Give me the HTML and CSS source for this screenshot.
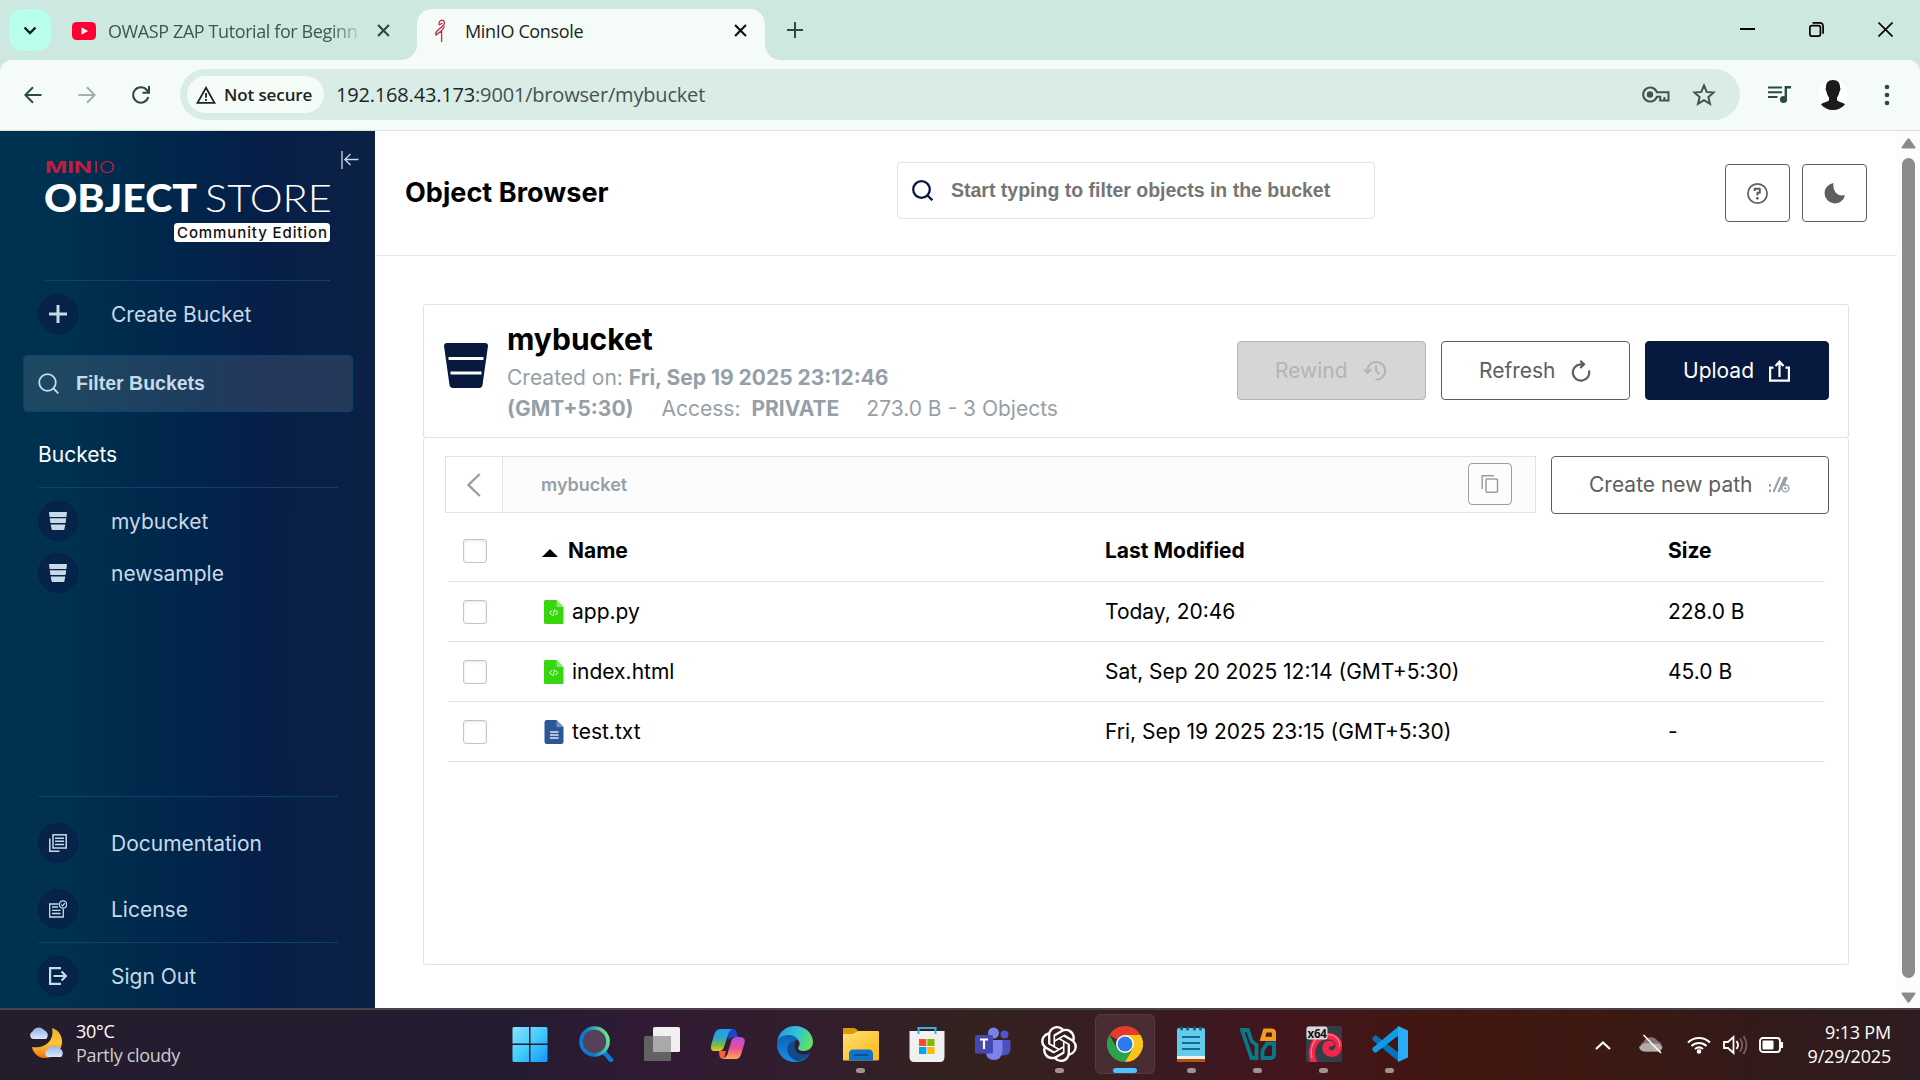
FILE: index.html
```html
<!DOCTYPE html>
<html lang="en">
<head>
<meta charset="utf-8">
<title>MinIO Console</title>
<link rel="stylesheet" href="styles.css">
</head>
<body>
<svg class="defs" width="0" height="0" aria-hidden="true">
  <symbol id="bucket" viewBox="0 0 18 18"><path fill="currentColor" d="M0 .8Q0 0 .8 0H17.2Q18 0 18 .8L17.4 5H.6ZM.8 6.3H17.2L16.6 11H1.4ZM1.7 12.5H16.3L15.4 17.2Q15.2 18 14.5 18H3.5Q2.8 18 2.6 17.2Z"/></symbol>
  <symbol id="close" viewBox="0 0 12 12"><path d="M1 1 11 11M11 1 1 11" fill="none" stroke="currentColor" stroke-width="2"/></symbol>
  <symbol id="search" viewBox="0 0 21 21"><circle cx="9.5" cy="9.5" r="8.3"/><path d="M15.5 15.5 20.3 20.3"/></symbol>
  <symbol id="codefile" viewBox="0 0 20 24"><path fill="#37d60f" d="M1.5 0H12.5L19.5 7V22.5Q19.5 24 18 24H1.5Q0 24 0 22.5V1.5Q0 0 1.5 0Z"/><path fill="#86ea6d" d="M12.5 0 19.5 7H12.5Z"/><path fill="none" stroke="#fff" stroke-width="1" d="M8 10.2 5.8 12.7 8 15.2M11.5 10.2 13.7 12.7 11.5 15.2M10.5 9.7 9 16"/></symbol>
</svg>

<header class="tabstrip">
  <div class="tabsearch"><svg width="14" height="9" viewBox="0 0 14 9"><path d="M1.5 1.5 7 7 12.5 1.5" fill="none" stroke="#0e1f1a" stroke-width="2.4"/></svg></div>
  <div class="tab idle">
    <svg width="24" height="18" viewBox="0 0 24 18"><rect width="24" height="18" rx="4.5" fill="#ff0033"/><path d="M9.5 5.2 16 9 9.5 12.8Z" fill="#fff"/></svg>
    <span class="tabtitle fade">OWASP ZAP Tutorial for Beginn</span>
    <svg class="x" width="13" height="13"><use href="#close"/></svg>
  </div>
  <div class="tab active">
    <svg class="bird" width="14" height="24" viewBox="0 0 14 24"><path d="M5 6Q5 1.2 8 1.2 11.7 2 9.8 6L3.2 11.7Q1 14.5 2 16L7.8 11.5 10.5 7.5M2.5 15.7 1.5 16.5M7.6 11.5V23M5 6 8.5 4.2" fill="none" stroke="#c72c48" stroke-width="1.3"/></svg>
    <span class="tabtitle">MinIO Console</span>
    <svg class="x" width="13" height="13"><use href="#close"/></svg>
  </div>
  <svg class="plus" width="16" height="16" viewBox="0 0 16 16"><path d="M8 0V16M0 8H16" stroke="#2b4a40" stroke-width="2"/></svg>
  <div class="winctl">
    <svg width="15" height="15" viewBox="0 0 15 15"><path d="M0 7H15" stroke="#000" stroke-width="2"/></svg>
    <svg width="15" height="15" viewBox="0 0 15 15" fill="none" stroke="#000" stroke-width="1.7"><rect x=".9" y="3.6" width="10.5" height="10.5" rx="2"/><path d="M3.6 1.2Q4 .9 5 .9H10.5Q14.1 .9 14.1 4.5V10Q14.1 11 13.6 11.6"/></svg>
    <svg width="15" height="15" viewBox="0 0 15 15"><path d="M.5 .5 14.5 14.5M14.5 .5 .5 14.5" stroke="#000" stroke-width="1.6"/></svg>
  </div>
</header>

<div class="toolwrap"><nav class="toolbar">
  <svg class="nav" width="18" height="18" viewBox="0 0 18 18"><path d="M17.5 9H1.5M9 1.2 1.3 9 9 16.8" fill="none" stroke="#2b4a40" stroke-width="2"/></svg>
  <svg class="nav" width="18" height="18" viewBox="0 0 18 18"><path d="M.5 9H16.5M9 1.2 16.7 9 9 16.8" fill="none" stroke="#a0b0aa" stroke-width="2"/></svg>
  <svg class="nav" width="18" height="18" viewBox="0 0 18 18"><path d="M16.3 11A7.7 7.7 0 1 1 14.8 4L17 6.5M17 0V6.8H10.5" fill="none" stroke="#2b4a40" stroke-width="2"/></svg>
  <div class="omnibox">
    <div class="chip"><svg width="20" height="18" viewBox="0 0 20 18"><path d="M10 1.8 18.5 16.9H1.5Z" fill="none" stroke="#1d2623" stroke-width="1.8"/><path d="M10 7V11.7M10 13V15" stroke="#1d2623" stroke-width="1.8"/></svg><span>Not secure</span></div>
    <div class="url"><b>192.168.43.173</b>:9001/browser/mybucket</div>
    <svg class="key" width="28" height="17" viewBox="0 0 28 17" fill="none" stroke="#44524d" stroke-width="2"><path d="M14.8 6.2A7 7 0 1 0 14.8 10.8H18.2V14.5H26.5V6.2Z"/><circle cx="8" cy="8.5" r="2.2" fill="#44524d"/><path d="M22.4 14V11"/></svg>
    <svg width="24" height="23" viewBox="0 0 24 23"><path d="M12 2.5 14.7 8.9 21.6 9.5 16.4 14 18 20.8 12 17.2 6 20.8 7.6 14 2.4 9.5 9.3 8.9Z" fill="none" stroke="#44524d" stroke-width="2"/></svg>
  </div>
  <svg class="queue" width="24" height="18" viewBox="0 0 24 18"><path d="M0 1.5H14M0 6.3H14M0 11H9.5" stroke="#2b4a40" stroke-width="2"/><path d="M17.8 13V1.2H23" fill="none" stroke="#2b4a40" stroke-width="2.4"/><circle cx="15.5" cy="13.5" r="3.6" fill="#2b4a40"/></svg>
  <svg class="avatar" width="30" height="30" viewBox="0 0 30 30"><circle cx="15" cy="15" r="15" fill="#fff"/><path d="M15 0C10 0 7.8 3 8 7.5 7.2 8 7.5 10.5 8.5 11.5 9 15 10.5 16.5 11 17.5V20.5C8 22.5 4.5 22.5 3 24.5 6 28 10 30 15 30S24 28 27 24.500C25.500 22.500 22 22.500 19 20.500V17.500C19.500 16.500 21 15 21.500 11.500 22.500 10.500 22.800 8 22 7.500 22.200 3 20 0 15 0Z" fill="#1c1b1a"/></svg>
  <svg class="dots" width="6" height="22" viewBox="0 0 6 22"><g fill="#2b4a40"><circle cx="3" cy="3" r="2.3"/><circle cx="3" cy="11" r="2.3"/><circle cx="3" cy="19" r="2.3"/></g></svg>
</nav></div>

<div class="page">
  <aside class="sidebar">
    <div class="brand">
      <svg class="logo" width="285" height="82" viewBox="0 0 285 82">
        <text class="lg-min" x="0" y="12" textLength="47" lengthAdjust="spacingAndGlyphs">MIN</text>
        <text class="lg-io" x="48" y="12" textLength="22" lengthAdjust="spacingAndGlyphs">IO</text>
        <text class="lg-object" x="-1" y="51" textLength="153" lengthAdjust="spacingAndGlyphs">OBJECT</text>
        <text class="lg-store" x="160" y="51" textLength="127" lengthAdjust="spacingAndGlyphs">STORE</text>
        <rect x="129" y="62" width="156" height="19" rx="3.500" fill="#fff"/>
        <text class="lg-ed" x="132" y="76.500" textLength="150" lengthAdjust="spacing">Community Edition</text>
      </svg>
      <svg class="collapse" width="18" height="18" viewBox="0 0 18 18"><path d="M1 0V18M17.500 8.500H4M9.500 3 3.800 8.500 9.500 14" fill="none" stroke="#c8d9e9" stroke-width="1.300"/></svg>
    </div>
    <div class="item create"><i class="disc"><svg width="18" height="18" viewBox="0 0 18 18"><path d="M9 0V18M0 9H18" stroke="#c8d9e9" stroke-width="3"/></svg></i>Create Bucket</div>
    <div class="filter"><svg width="21" height="21" class="s-light"><use href="#search"/></svg>Filter Buckets</div>
    <div class="heading">Buckets</div>
    <div class="item bk"><i class="disc"><svg width="18" height="18"><use href="#bucket"/></svg></i>mybucket</div>
    <div class="item bk"><i class="disc"><svg width="18" height="18"><use href="#bucket"/></svg></i>newsample</div>
    <div class="bottom">
      <div class="item low"><i class="disc"><svg width="18" height="18" viewBox="0 0 18 18" fill="none" stroke="#c8d9e9" stroke-width="1.500"><rect x="4" y=".8" width="13.200" height="13.200"/><path d="M.8 4.500V17.200H10.500M6 4.200H15M6 7.300H15M6 10.500H15"/></svg></i>Documentation</div>
      <div class="item low"><i class="disc"><svg width="18" height="18" viewBox="0 0 18 18" fill="none" stroke="#c8d9e9" stroke-width="1.300"><path d="M9.500 4H.7V17H14.300V9M3 7H9M3 10.300H11.500M3 13.500H11.500"/><circle cx="14" cy="4.500" r="3.700"/><path d="M12.300 4.600 13.600 5.900 15.800 3.200"/></svg></i>License</div>
      <div class="item low out"><i class="disc"><svg width="18" height="18" viewBox="0 0 18 18" fill="none" stroke="#c8d9e9" stroke-width="2.200"><path d="M12 1.100H1.100V16.900H12M4.500 9H16.500M12.500 4.500 17 9 12.500 13.500"/></svg></i>Sign Out</div>
    </div>
  </aside>

  <main class="main">
    <div class="pagehead">
      <h1>Object Browser</h1>
      <div class="searchbox"><svg width="21" height="21" class="s-dark"><use href="#search"/></svg>Start typing to filter objects in the bucket</div>
      <div class="headbtns">
        <div class="sq"><svg width="21" height="21" viewBox="0 0 21 21"><circle cx="10.500" cy="10.500" r="9.600" fill="none" stroke="#5e5e5e" stroke-width="1.700"/><path d="M7.700 8V5.800H12.800V9.800H10.400V12.500" fill="none" stroke="#5e5e5e" stroke-width="2" stroke-linejoin="round"/><circle cx="10.400" cy="15.300" r="1.400" fill="#5e5e5e"/></svg></div>
        <div class="sq"><svg width="21" height="21" viewBox="0 0 21 21"><path d="M9.500 0A10.300 10.300 0 1 0 21 12Q15 13.500 11.500 9.500 8.700 6 9.500 0Z" fill="#5e5e5e"/></svg></div>
      </div>
    </div>

    <div class="card">
      <section class="cardhead">
        <svg class="bigbucket" width="44" height="45" viewBox="0 0 44 45"><path fill="#07193e" d="M0 3Q0 0 3 0H41Q44 0 44 3L38.500 42Q38 45 35 45H9Q6 45 5.500 42Z"/><path d="M4.500 15.500H39.500M6.500 30H37.500" stroke="#fff" stroke-width="3"/></svg>
        <div class="info">
          <h2>mybucket</h2>
          <p>Created on: <b>Fri, Sep 19 2025 23:12:46</b></p>
          <p class="l2"><b>(GMT+5:30)</b><span class="acc">Access:</span><b class="priv">PRIVATE</b><span>273.0 B - 3 Objects</span></p>
        </div>
        <div class="btn off rw">Rewind<svg width="24" height="21" viewBox="0 0 24 21" fill="none" stroke="#b4b4b4" stroke-width="2"><path d="M4.300 12V10A9 8.800 0 1 1 12.500 19.500M.8 9.200 4.300 12.800 8 9.200M13 5.500V10.500L16 14"/></svg></div>
        <div class="btn rf">Refresh<svg width="20" height="22" viewBox="0 0 20 22" fill="none" stroke="#5e5e5e" stroke-width="2.200"><path d="M18 10.500A8.200 8.200 0 1 1 9.500 4.300H13M9.300 .8 13 4.300 9.300 8"/></svg></div>
        <div class="btn prim">Upload<svg width="21" height="22" viewBox="0 0 21 22" fill="none" stroke="#fff" stroke-width="2.200"><path d="M4.500 7.600H1.100V20.600H19.900V7.600H16.500M10.500 17V2.500M6.500 6 10.500 1.700 14.500 6"/></svg></div>
      </section>

      <section class="cardbody">
        <div class="pathrow">
          <div class="crumb">
            <div class="back"><svg width="14" height="24" viewBox="0 0 14 24"><path d="M12.800 1 1.500 12 12.800 23" fill="none" stroke="#969fa8" stroke-width="2.400"/></svg></div>
            <div class="where">mybucket</div>
            <div class="copy"><svg width="18" height="18" viewBox="0 0 18 18" fill="none" stroke="#969fa8" stroke-width="1.500"><path d="M1.200 14V.8H13"/><rect x="5" y="4" width="11.500" height="13.200" rx="1"/></svg></div>
          </div>
          <div class="btn newpath">Create new path<svg width="22" height="17" viewBox="0 0 22 17" fill="none" stroke="#969fa8" stroke-width="2"><path d="M2 8V10.500M2 13.500V16M5.500 16 12 1M10.500 16 17 1M19 1 15.500 9"/><circle cx="17.300" cy="12.300" r="3.600" stroke-width="1.400"/><path d="M15.700 12.300H19M17.300 10.700V14" stroke-width="1"/></svg></div>
        </div>
        <div class="table">
          <div class="tr th"><span class="cb"></span><div class="name"><svg class="sort" width="16" height="8" viewBox="0 0 16 8"><path d="M8 0 16 8H0Z"/></svg>Name</div><div>Last Modified</div><div>Size</div></div>
          <div class="tr"><span class="cb"></span><div class="name"><svg width="20" height="24"><use href="#codefile"/></svg>app.py</div><div>Today, 20:46</div><div>228.0 B</div></div>
          <div class="tr"><span class="cb"></span><div class="name"><svg width="20" height="24"><use href="#codefile"/></svg>index.html</div><div>Sat, Sep 20 2025 12:14 (GMT+5:30)</div><div>45.0 B</div></div>
          <div class="tr"><span class="cb"></span><div class="name"><svg width="20" height="24" viewBox="0 0 20 24"><path fill="#2b5797" d="M2.500 0H12.500L19.500 7V21.500Q19.500 24 17 24H3Q.5 24 .5 21.500V2.500Q.5 0 2.500 0Z"/><path fill="#6f93c8" d="M12.500 0 19.500 7H12.500Z"/><path stroke="#dce6f5" stroke-width="1.600" d="M6 12H14.500M6 15H14.500M6 18H14.500"/></svg>test.txt</div><div>Fri, Sep 19 2025 23:15 (GMT+5:30)</div><div>-</div></div>
        </div>
      </section>
    </div>
  </main>

  <div class="scroll">
    <svg width="15" height="11" viewBox="0 0 15 11"><path d="M7.500 1.200 13.500 9.500H1.500Z" fill="#8b8b8b" stroke="#8b8b8b" stroke-width="2" stroke-linejoin="round"/></svg>
    <div class="thumb"></div>
    <svg width="15" height="11" viewBox="0 0 15 11"><path d="M7.500 9.800 13.500 1.500H1.500Z" fill="#8b8b8b" stroke="#8b8b8b" stroke-width="2" stroke-linejoin="round"/></svg>
  </div>
</div>

<footer class="taskbar">
  <div class="weather">
    <svg width="37" height="34" viewBox="0 0 37 34">
      <defs><linearGradient id="mn" x1="0" y1="0" x2="0" y2="1"><stop offset="0" stop-color="#e9ae3b"/><stop offset=".5" stop-color="#ffc730"/><stop offset="1" stop-color="#f0750f"/></linearGradient><linearGradient id="cl" x1="0" y1="0" x2="0" y2="1"><stop offset="0" stop-color="#8fb3ea"/><stop offset="1" stop-color="#dbe7fa"/></linearGradient></defs>
      <path d="M23 3C30 5 33.500 11 33 18 32 28 24 33 16 33 9 33 4 28 3 22 13 24 26 18 23 3Z" fill="url(#mn)"/>
      <path d="M4 14A4 4 0 0 1 3.500 6.500 7 7 0 0 1 15.500 5.500 5 5 0 0 1 17 14Z" fill="url(#cl)"/>
      <path d="M19 32A4 4 0 0 1 18.500 24.500 7 7 0 0 1 30.500 23.500 5 5 0 0 1 32 32Z" fill="url(#cl)"/>
    </svg>
    <div><div>30°C</div><div class="dim">Partly cloudy</div></div>
  </div>
  <div class="apps">
    <div class="app"><svg width="36" height="36" viewBox="0 0 36 36"><defs><linearGradient id="win" gradientUnits="userSpaceOnUse" x1="0" y1="0" x2="36" y2="36"><stop offset="0" stop-color="#8fe3ff"/><stop offset=".5" stop-color="#43ccfc"/><stop offset="1" stop-color="#0f97fa"/></linearGradient></defs><path fill="url(#win)" d="M1.500 1H17V17.500H.5V2ZM18.500 1H34.500L35.500 2V17.500H18.500ZM.5 19H17V36H1.500L.5 35ZM18.500 19H35.500V35L34.500 36H18.500Z"/></svg></div>
    <div class="app"><svg width="36" height="36" viewBox="0 0 36 36"><defs><linearGradient id="sr" x1="0" y1="0.500" x2="1" y2=".2"><stop offset=".3" stop-color="#0f7ad4"/><stop offset="1" stop-color="#6af088"/></linearGradient></defs><path d="M26 26 33 34" stroke="#0a7cdd" stroke-width="4.500" stroke-linecap="round"/><circle cx="16.500" cy="15.500" r="13.500" fill="#55425a" stroke="url(#sr)" stroke-width="3.600"/></svg></div>
    <div class="app"><svg width="36" height="36" viewBox="0 0 36 36"><rect x="0" y="10" width="27" height="25" rx="1.500" fill="#646163"/><rect x="9" y="1" width="27" height="25" rx="1.500" fill="#f1f0f1"/><rect x="9" y="10" width="18" height="16" fill="#aaa9aa"/></svg></div>
    <div class="app"><svg width="36" height="36" viewBox="0 0 36 36"><defs><linearGradient id="ca" x1="0" y1="0" x2="0" y2="1"><stop offset="0" stop-color="#1a9cf0"/><stop offset=".45" stop-color="#37a7c0"/><stop offset=".75" stop-color="#7bbd3d"/><stop offset="1" stop-color="#f7c32a"/></linearGradient><linearGradient id="cb" x1="0" y1="0" x2="0" y2="1"><stop offset="0" stop-color="#b04fe8"/><stop offset=".5" stop-color="#ec4f93"/><stop offset="1" stop-color="#ffa552"/></linearGradient></defs><path d="M17 3H23Q26 3 26.500 6L28 11H24Q20 11 19 15Z" fill="#1b47c9"/><path d="M9 25H16L14 33Q10 33 9.500 30Z" fill="#f0643a"/><path d="M10 3H22Q19 5 18 9L14 21Q13 25 9 25H4Q0 25 1.200 19L4 9Q6 3 10 3Z" fill="url(#ca)"/><path d="M27 11H30Q36 11 34.500 17L31.500 27Q30 33 26 33H12Q16 32 17.500 28L21 16Q22 11 27 11Z" fill="url(#cb)"/></svg></div>
    <div class="app"><svg width="36" height="36" viewBox="0 0 36 36"><defs><linearGradient id="eg" x1="0" y1=".3" x2="1" y2=".6"><stop offset="0" stop-color="#1d9be2"/><stop offset=".5" stop-color="#34c2d8"/><stop offset="1" stop-color="#64e45a"/></linearGradient><linearGradient id="eb" x1="0" y1="0" x2="0" y2="1"><stop offset="0" stop-color="#0a62b4"/><stop offset="1" stop-color="#188fe5"/></linearGradient></defs><path d="M0 17C1 6 9 0 18 0 29 0 36 8 36 16 36 22 31 25 27 25 22 25 20.500 23 21.500 21 25 16 20 11 14 11 7 9 1 12 0 17Z" fill="url(#eg)"/><path d="M0 18C1 11 7 8.500 13 9 18 9.500 21 13 21 14 17 14 14 17 14 21 15 29 24 33 33 27 30 33 25 36 18 36 8 36 0 29 0 18Z" fill="url(#eb)"/><path d="M18 14.500C12 16 9.500 20 10.500 25 12 32 18 35.500 23 35 28 33 32 30 33.300 27.300 25 31 15 27 18 14.500Z" fill="#114a91"/></svg></div>
    <div class="app run"><svg width="36" height="36" viewBox="0 0 36 36"><defs><linearGradient id="fo" x1="0" y1="0" x2="1" y2="1"><stop offset="0" stop-color="#ffdf77"/><stop offset="1" stop-color="#fbb911"/></linearGradient></defs><path d="M0 3Q0 2 1 2H11Q13 2 15 5L12 9H0Z" fill="#dd9b06"/><path d="M0 8H10L15 5H35Q36 5 36 6V33.500Q36 34.500 35 34.500H1Q0 34.500 0 33.500Z" fill="url(#fo)"/><path d="M6 34.500V28Q6 23.500 10 23.500H26Q30 23.500 30 28V34.500Z" fill="#1273c6"/><path d="M11 29H25" stroke="#0b4f94" stroke-width="2"/></svg></div>
    <div class="app"><svg width="36" height="36" viewBox="0 0 36 36"><path d="M.5 5H35.500V31Q35.500 36 31 36H5Q.5 36 .5 31Z" fill="#f0f0f0"/><path d="M9.500 8V2H26.500V8" fill="none" stroke="#35aee8" stroke-width="2"/><path fill="#f25022" d="M10 13H17.300V20H10Z"/><path fill="#7fba00" d="M18.300 13H25.500V20H18.300Z"/><path fill="#00a4ef" d="M10 21H17.300V28H10Z"/><path fill="#ffb900" d="M18.300 21H25.500V28H18.300Z"/></svg></div>
    <div class="app"><svg width="36" height="36" viewBox="0 0 36 36"><circle cx="29.500" cy="8.500" r="4" fill="#4f55c8"/><path d="M26 14H34.500Q35.500 14 35.500 15V23Q35 29 29 29.500H26Z" fill="#4d50be"/><circle cx="18.500" cy="7" r="5.500" fill="#7a82ea"/><path d="M11 14H26Q27.500 14 27.500 16V25Q26.500 34 19 34T11 27Z" fill="#7b83eb"/><rect y="9" width="18" height="18.500" rx="1.500" fill="#454ab0"/><path d="M5 13.500H13M9 13.500V23" stroke="#fff" stroke-width="2.200"/></svg></div>
    <div class="app run"><svg width="36" height="36" viewBox="0 0 24 24"><path fill="#fff" d="M22.282 9.821a5.985 5.985 0 0 0-.516-4.910 6.046 6.046 0 0 0-6.510-2.900A6.065 6.065 0 0 0 4.981 4.182a5.985 5.985 0 0 0-3.998 2.900 6.046 6.046 0 0 0 .743 7.097 5.980 5.980 0 0 0 .510 4.911 6.051 6.051 0 0 0 6.515 2.900A5.985 5.985 0 0 0 13.260 24a6.056 6.056 0 0 0 5.772-4.206 5.990 5.990 0 0 0 3.998-2.900 6.056 6.056 0 0 0-.748-7.073zM13.260 22.430a4.476 4.476 0 0 1-2.876-1.040l.141-.081 4.779-2.758a.795.795 0 0 0 .392-.681v-6.737l2.020 1.169a.071.071 0 0 1 .038.052v5.583a4.504 4.504 0 0 1-4.494 4.493zM3.600 18.304a4.470 4.470 0 0 1-.535-3.014l.142.085 4.783 2.759a.771.771 0 0 0 .781 0l5.843-3.369v2.332a.080.080 0 0 1-.033.062L9.740 19.950a4.500 4.500 0 0 1-6.140-1.646zM2.341 7.896a4.485 4.485 0 0 1 2.366-1.973V11.600a.766.766 0 0 0 .388.677l5.815 3.354-2.020 1.169a.076.076 0 0 1-.071 0l-4.830-2.786A4.504 4.504 0 0 1 2.341 7.872zm16.597 3.856L13.104 8.364l2.015-1.164a.076.076 0 0 1 .071 0l4.830 2.791a4.494 4.494 0 0 1-.676 8.105v-5.678a.790.790 0 0 0-.407-.667zm2.010-3.024-.142-.085-4.773-2.782a.776.776 0 0 0-.785 0L9.409 9.230V6.897a.066.066 0 0 1 .028-.061l4.830-2.787a4.499 4.499 0 0 1 6.680 4.660zM8.307 12.863l-2.020-1.164a.080.080 0 0 1-.038-.057V6.074a4.499 4.499 0 0 1 7.376-3.453l-.142.080-4.778 2.758a.795.795 0 0 0-.393.682zm1.098-2.366L12.006 8.998l2.607 1.500v2.999l-2.597 1.500-2.607-1.500z"/></svg></div>
    <div class="app run on"><svg width="36" height="36" viewBox="0 0 36 36"><path d="M2.400 9A18 18 0 0 1 33.600 9L18 18Z" fill="#e33b2e"/><path d="M2.400 9A18 18 0 0 0 18 36L25.800 22.500 10.200 22.500Z" fill="#2da14b"/><path d="M33.600 9A18 18 0 0 1 18 36L25.800 22.500 18 9Z" fill="#fcc419"/><circle cx="18" cy="18" r="9" fill="#fff"/><circle cx="18" cy="18" r="7.500" fill="#2e7bf0"/></svg></div>
    <div class="app run"><svg width="36" height="36" viewBox="0 0 36 36"><path fill="#b45309" d="M4 32H32V36H4Z"/><path fill="#f2f2f2" d="M4 28H32V33H4Z"/><path fill="#64cbea" d="M4 4Q4 2 6 2H30Q32 2 32 4V30H4Z"/><path stroke="#0b6c94" stroke-width="2.200" d="M9 11H27M9 17H27M9 23H27"/><path stroke="#12607f" stroke-width="3" stroke-linecap="round" d="M8.500 2V3M14.500 2V3M21.500 2V3M27.500 2V3"/></svg></div>
    <div class="app run"><svg width="36" height="36" viewBox="0 0 36 36"><path fill="none" stroke="#067a8a" stroke-width="3.800" d="M2 4H8L11.500 15 16.500 19V32H11.500ZM34 17.500H27L22.500 24.500V32H30.500Q34 32 34 28.500Z"/><path fill="none" stroke="#f59a1c" stroke-width="4.200" d="M22.500 12.800 25 4.500H31Q34 4.500 34 7V12.800Z"/></svg></div>
    <div class="app run"><svg width="36" height="36" viewBox="0 0 36 36"><defs><clipPath id="dbg"><rect width="36" height="36" rx="1.500"/></clipPath></defs><g clip-path="url(#dbg)"><rect width="36" height="36" fill="#363c48"/><path d="M9 39C4 30 4 12 20 10 30 9.500 34 16 32.500 22 30 30 20 29 19.500 22 20 17 25 17 26 20" fill="none" stroke="#f0264a" stroke-width="6.500"/><path d="M6 32C3 20 9 9 21 8.500 30 8.500 34.500 14 33.500 21" fill="none" stroke="#ff8c9c" stroke-width="1.200"/></g><rect x=".5" y=".5" width="21" height="13" rx="2.500" fill="#d9d9d9"/><text class="x64" x="1.500" y="11.500" textLength="19" lengthAdjust="spacingAndGlyphs">x64</text></svg></div>
    <div class="app run"><svg width="36" height="36" viewBox="0 0 36 36"><path fill="#0872b9" d="M.5 11.500 3.500 9 27 27V36L.5 14Z"/><path fill="#109be8" d="M.5 24.500 3.500 27 27 9V0L.5 22Z"/><path fill="#2aabf5" d="M26 0 36 4.500V31.500L26 36Z"/></svg></div>
  </div>
  <div class="tray">
    <svg class="t1" width="16" height="9" viewBox="0 0 16 9"><path d="M1 8 8 1.500 15 8" fill="none" stroke="#fff" stroke-width="2.200"/></svg>
    <svg class="t2" width="24" height="20" viewBox="0 0 24 20"><path d="M6 17.500A5 5 0 0 1 4.500 8 8 8 0 0 1 18.500 7 5.500 5.500 0 0 1 19 17.500Z" fill="#857476"/><path d="M0 13Q7 7 13 10 20 8 23.500 13 22 17.500 19 17.500H5Q1 17 0 13Z" fill="#b5abab"/><path d="M4.500 1 22 19" stroke="#fff" stroke-width="1.600"/></svg>
    <svg class="t3" width="24" height="18" viewBox="0 0 24 18" fill="none" stroke="#fff" stroke-width="2"><path d="M1 6.500A15.500 15.500 0 0 1 23 6.500M4.500 10A10.800 10.800 0 0 1 19.500 10M8 13A6.300 6.300 0 0 1 16 13"/><circle cx="12" cy="15.500" r="1.300" fill="#fff"/></svg>
    <svg class="t4" width="25" height="20" viewBox="0 0 25 20" fill="none" stroke="#fff" stroke-width="1.800"><path d="M1 7H5L10.500 2V18L5 13H1Z"/><path d="M13.500 6Q16.500 10 13.500 14"/><path d="M17 3.500Q21.500 10 17 16.500M20.500 1Q26.500 10 20.500 19" stroke="#785f5c"/></svg>
    <svg class="t5" width="25" height="16" viewBox="0 0 25 16"><rect x="1" y="1" width="20" height="14" rx="3" fill="none" stroke="#fff" stroke-width="1.900"/><rect x="3.500" y="3.500" width="11" height="9" rx="1" fill="#fff"/><path d="M22.800 5V11" stroke="#fff" stroke-width="2.500"/></svg>
    <div class="clock"><div>9:13 PM</div><div>9/29/2025</div></div>
  </div>
</footer>
</body>
</html>
```
FILE: styles.css
```css
* { box-sizing: border-box; }
html, body { height: 100%; }
body {
  margin: 0; width: 1920px; height: 1080px; overflow: hidden;
  display: flex; flex-direction: column;
  font-family: Inter, "Liberation Sans", sans-serif; color: #000; background: #fff;
}
svg { display: block; flex: none; }
.defs { position: absolute; }
h1, h2, p { margin: 0; }

/* Browser tabs */
.tabstrip {
  height: 60px; flex: none; display: flex; padding: 9px 27px 0 9px; background: #cde8e1;
  font: 18px "Open Sans", "Noto Sans", sans-serif; letter-spacing: -.35px; color: #1b2522;
}
.tabsearch { width: 42px; height: 42px; border-radius: 14px; background: #b9ffec; display: flex; align-items: center; justify-content: center; }
.tab { display: flex; align-items: center; height: 51px; padding-bottom: 8px; }
.tab.idle { width: 366px; padding-left: 21px; color: #44544f; }
.tab.idle .x { color: #34473f; margin-left: 17px; }
.tabtitle { white-space: nowrap; }
.fade { width: 252px; margin-left: 12px; letter-spacing: -.4px; -webkit-mask-image: linear-gradient(90deg, #000 222px, transparent 256px); mask-image: linear-gradient(90deg, #000 222px, transparent 256px); }
.tab.active {
  width: 348px; padding-left: 17px; background: #f5fbf7; border-radius: 15px 15px 0 0; position: relative;
}
.tab.active::before, .tab.active::after {
  content: ""; position: absolute; bottom: 0; width: 15px; height: 15px;
}
.tab.active::before { left: -15px; background: radial-gradient(circle at 0 0, transparent 14.500px, #f5fbf7 15px); }
.tab.active::after { right: -15px; background: radial-gradient(circle at 100% 0, transparent 14.500px, #f5fbf7 15px); }
.tab.active .tabtitle { margin-left: 17px; }
.tab.active .x { margin-left: auto; margin-right: 18px; color: #111; }
.plus { margin: 13px 0 0 22px; }
.winctl { display: flex; gap: 54px; margin-left: auto; padding-top: 13px; }

/* Toolbar */
.toolwrap { flex: none; height: 71px; background: #cde8e1; }
.toolbar {
  height: 71px; display: flex; align-items: center; padding: 0 30px 1px 24px;
  background: #f5fbf7; border-radius: 12px 12px 0 0; border-bottom: 1px solid #d5e5de;
  font: 18px "Open Sans", "Noto Sans", sans-serif;
}
.nav { margin-right: 36px; }
.nav + .nav + .nav { margin-right: 30px; }
.omnibox { width: 1560px; height: 51px; border-radius: 26px; background: #daece6; display: flex; align-items: center; padding: 0 24px 0 7px; }
.chip { width: 137px; height: 37px; border-radius: 19px; background: #f5fbf7; display: flex; align-items: center; padding-left: 9px; gap: 8px; font-weight: 600; font-size: 17px; letter-spacing: -.1px; color: #1d2623; white-space: nowrap; }
.url { margin-left: 12px; flex: 1; font-size: 20px; letter-spacing: -.18px; color: #44544f; white-space: nowrap; }
.url b { font-weight: 400; color: #1d2623; }
.key { margin-right: 22px; }
.queue { margin-left: 28px; }
.avatar { margin-left: 26px; }
.dots { margin-left: 36px; }

/* Page */
.page { flex: none; height: 877px; display: flex; }
.sidebar {
  width: 375px; flex: none; display: flex; flex-direction: column;
  background: linear-gradient(90deg, #003250 0%, #00304f 20%, #00264b 48%, #071f48 70%, #0b2044 100%);
  color: #c8d9e9; font-size: 21px;
}
.brand { margin: 0 16px 0 45px; height: 150px; display: flex; position: relative; padding-top: 30px; }
.brand::after { content: ""; position: absolute; left: 0; width: 285px; bottom: 0; height: 1px; background: #0d426b; }
.collapse { margin: -10px 0 0 11px; }
.logo { overflow: visible; }
.lg-min { font: 700 15.500px Inter, sans-serif; fill: #c51b3f; }
.lg-io { font: 300 15.500px Inter, sans-serif; fill: #c51b3f; }
.lg-object { font: 900 37px Lato, sans-serif; fill: #fff; }
.lg-store { font: 300 37px Lato, sans-serif; fill: #fff; }
.lg-ed { font: 500 15px Inter, sans-serif; fill: #111; }
.item { display: flex; align-items: center; height: 52px; padding-left: 38px; gap: 33px; }
.disc { width: 40px; height: 40px; flex: none; border-radius: 50%; background: #062349; border: 1px solid #071f44; display: flex; align-items: center; justify-content: center; color: #c8d9e9; }
.create { height: 66px; }
.filter {
  margin: 8px 22px 0 23px; height: 57px; border: 1px solid #0d426b; border-radius: 4px; flex: none;
  background: rgba(255, 255, 255, .115); display: flex; align-items: center; gap: 17px; padding-left: 14px;
  font: bold 19.500px "Liberation Sans", sans-serif;
}
.s-light { fill: none; stroke: #c8d9e9; stroke-width: 1.800; }
.s-dark { fill: none; stroke: #07193e; stroke-width: 2.300; }
.heading { height: 76px; flex: none; margin: 0 37px 7px 38px; padding-top: 11px; line-height: 64px; color: #fff; border-bottom: 1px solid #143f66; }
.bottom { margin: auto 37px 0 38px; border-top: 1px solid #0d426b; padding-top: 13px; height: 212px; }
.low { height: 66px; padding-left: 0; }
.low.out { border-top: 1px solid #0d426b; height: 67px; }

.main { flex: 1; }
.pagehead { height: 125px; border-bottom: 1px solid #e5e5e5; display: flex; padding: 31px 30px 0 30px; }
h1 { width: 492px; font-size: 27px; line-height: 62px; letter-spacing: .05px; font-weight: 700; }
.searchbox {
  width: 478px; height: 57px; border: 1px solid #e2e2e2; border-radius: 4px; display: flex; align-items: center;
  padding-left: 14px; gap: 18px; font: bold 19.500px "Liberation Sans", sans-serif; color: #757575; white-space: nowrap;
}
.headbtns { margin: 2px 0 0 auto; display: flex; gap: 12px; }
.sq { width: 65px; height: 58px; border: 1px solid #5e5e5e; border-radius: 4px; display: flex; align-items: center; justify-content: center; }

.card { margin: 48px 48px 0; }
.cardhead { height: 134px; border: 1px solid #e2e2e2; border-radius: 3px; display: flex; padding: 0 19px 0 20px; }
.bigbucket { margin-top: 38px; }
.info { padding-left: 19px; margin-top: 12px; color: #969fa8; font-size: 21px; white-space: nowrap; }
h2 { font-size: 30px; line-height: 45px; color: #000; }
.info p { line-height: 31px; }
.l2 { display: flex; }
.acc { margin: 0 11px 0 28px; }
.priv { margin-right: 27px; }
.btn { height: 59px; border: 1px solid #5e5e5e; border-radius: 4px; color: #5e5e5e; display: flex; align-items: center; justify-content: space-between; font-size: 21px; padding: 0 38px 0 37px; white-space: nowrap; }
.cardhead .btn { margin-top: 36px; }
.rw { width: 189px; margin: 0 15px 0 auto; }
.rf { width: 189px; margin-right: 15px; }
.btn.off { background: #d5d7d7; border-color: #b4b4b4; color: #b4b4b4; }
.btn.prim { width: 184px; background: #07193e; border-color: #07193e; color: #fff; }
.cardbody { height: 528px; margin-top: -1px; border: 1px solid #e2e2e2; border-radius: 3px; padding: 18px 19px 0 21px; }
.pathrow { display: flex; justify-content: space-between; }
.crumb { width: 1091px; height: 57px; border: 1px solid #e2e2e2; background: #fcfcfc; display: flex; align-items: center; }
.back { width: 57px; height: 55px; border-right: 1px solid #e2e2e2; background: #fff; display: flex; align-items: center; justify-content: center; }
.where { flex: 1; padding-left: 38px; font-size: 18px; font-weight: 600; color: #969fa8; }
.copy { width: 44px; height: 42px; border: 1px solid #969fa8; border-radius: 4px; margin: 0 23px 1px 0; display: flex; align-items: center; justify-content: center; }
.newpath { width: 278px; height: 58px; padding-bottom: 1px; }

.table { margin: 7px 4px 0 3px; font-size: 21px; }
.tr { height: 60px; border-bottom: 1px solid #e2e2e2; display: grid; grid-template-columns: 94px 563px 563px 1fr; align-items: center; }
.th { height: 61px; font-weight: 700; padding-bottom: 1px; }
.cb { width: 24px; height: 24px; margin-left: 15px; border: 1px solid #c3c4c4; border-radius: 3px; box-shadow: inset 0 1px 3px rgba(0, 0, 0, .1); }
.name { display: flex; align-items: center; gap: 8px; padding-left: 2px; }
.th .name { gap: 10px; padding-left: 0; }
.sort { margin-top: 4px; }

.scroll { width: 23px; background: #fcfcfc; display: flex; flex-direction: column; align-items: center; justify-content: space-between; padding: 7px 0 5px; }
.thumb { width: 13px; height: 820px; border-radius: 7px; background: #8b8b8b; margin-bottom: 5px; }

/* Taskbar */
.taskbar {
  height: 72px; flex: none; border-top: 2px solid #4a4249; display: flex; position: relative;
  background: linear-gradient(90deg, #241d2e 0, #241c30 500px, #311a34 650px, #321f2a 850px, #33221f 960px, #3b1a22 1180px, #43151d 1280px, #421611 1440px, #3c1912 1600px, #331a19 1750px, #2d1c20 1920px);
  font: 18px "Open Sans", "Noto Sans", sans-serif; color: #fff; letter-spacing: -.3px; line-height: 24px;
}
.weather { width: 500px; flex: none; display: flex; padding: 9px 0 0 29px; gap: 10px; }
.weather svg { margin-top: 6px; }
.dim { color: #cfcbd0; }
.apps { display: flex; gap: 6.150px; }
.app { width: 60px; flex: none; height: 60px; margin-top: 4px; border-radius: 6px; display: flex; flex-direction: column; align-items: center; padding-top: 12px; }
.run::after { content: ""; width: 9px; height: 5px; margin-top: 6px; border-radius: 3px; background: #a1918f; }
.on { background: rgba(255, 255, 255, .08); box-shadow: inset 0 0 0 1px rgba(255, 255, 255, .07); }
.on::after { width: 24px; background: #4cc2ff; }
.x64 { font: bold 12px "Open Sans", sans-serif; fill: #111; }
.tray { margin-left: auto; display: flex; align-items: center; padding: 0 29px 0 0; height: 70px; }
.t2 { margin: -2px 0 0 28px; }
.t3 { margin-left: 24px; }
.t4 { margin-left: 12px; }
.t5 { margin-left: 11px; }
.clock { width: 107px; text-align: right; letter-spacing: -.2px; margin-top: -2px; }
```
